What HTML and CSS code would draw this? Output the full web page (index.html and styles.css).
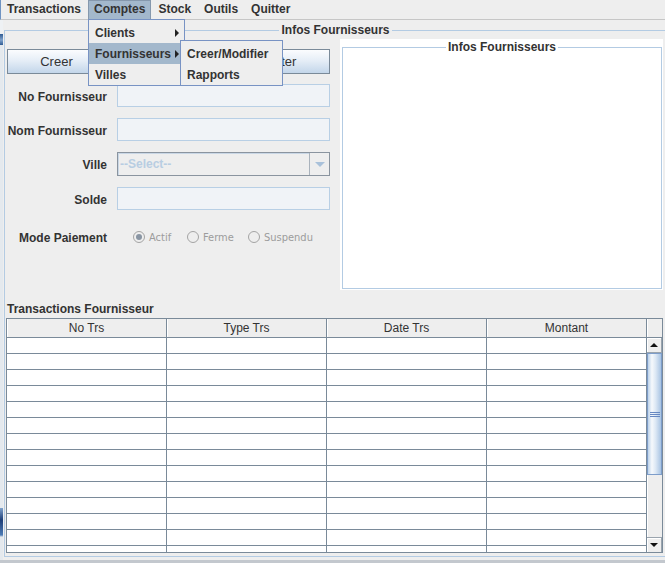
FILE: index.html
```html
<!DOCTYPE html>
<html lang="fr">
<head>
<meta charset="utf-8">
<title>Fournisseurs</title>
<link rel="stylesheet" href="styles.css">
</head>
<body>
<div class="window">
  <nav class="menubar">
    <span class="menu">Transactions</span>
    <span class="menu open">Comptes</span>
    <span class="menu">Stock</span>
    <span class="menu">Outils</span>
    <span class="menu">Quitter</span>
  </nav>
  <div class="main">
    <div class="strip"></div>
    <fieldset class="titled outer">
      <legend>Infos Fournisseurs</legend>
      <div class="upper">
        <div class="form">
          <div class="buttons">
            <button class="btn">Creer</button>
            <button class="btn" aria-label="Modifier"></button>
            <button class="btn">Lister</button>
          </div>
          <div class="grid">
            <span class="lbl">No Fournisseur</span><div class="field"></div>
            <span class="lbl">Nom Fournisseur</span><div class="field"></div>
            <span class="lbl">Ville</span>
            <div class="combo"><span class="combo-text">--Select--</span><span class="combo-arrow"></span></div>
            <span class="lbl">Solde</span><div class="field"></div>
            <span class="lbl">Mode Paiement</span>
            <div class="radios">
              <span class="radio r1"><span class="dot on"></span>Actif</span>
              <span class="radio r2"><span class="dot"></span>Ferme</span>
              <span class="radio"><span class="dot"></span>Suspendu</span>
            </div>
          </div>
        </div>
        <div class="panel">
          <fieldset class="titled inner"><legend>Infos Fournisseurs</legend></fieldset>
        </div>
      </div>
      <div class="section-title">Transactions Fournisseur</div>
      <div class="scrollpane">
        <div class="thead">
          <div class="th">No Trs</div>
          <div class="th">Type Trs</div>
          <div class="th">Date Trs</div>
          <div class="th">Montant</div>
          <div class="th corner"></div>
        </div>
        <div class="tbody">
          <div class="rows">
            <div class="tr"><div class="td"></div><div class="td"></div><div class="td"></div><div class="td"></div></div>
            <div class="tr"><div class="td"></div><div class="td"></div><div class="td"></div><div class="td"></div></div>
            <div class="tr"><div class="td"></div><div class="td"></div><div class="td"></div><div class="td"></div></div>
            <div class="tr"><div class="td"></div><div class="td"></div><div class="td"></div><div class="td"></div></div>
            <div class="tr"><div class="td"></div><div class="td"></div><div class="td"></div><div class="td"></div></div>
            <div class="tr"><div class="td"></div><div class="td"></div><div class="td"></div><div class="td"></div></div>
            <div class="tr"><div class="td"></div><div class="td"></div><div class="td"></div><div class="td"></div></div>
            <div class="tr"><div class="td"></div><div class="td"></div><div class="td"></div><div class="td"></div></div>
            <div class="tr"><div class="td"></div><div class="td"></div><div class="td"></div><div class="td"></div></div>
            <div class="tr"><div class="td"></div><div class="td"></div><div class="td"></div><div class="td"></div></div>
            <div class="tr"><div class="td"></div><div class="td"></div><div class="td"></div><div class="td"></div></div>
            <div class="tr"><div class="td"></div><div class="td"></div><div class="td"></div><div class="td"></div></div>
            <div class="tr"><div class="td"></div><div class="td"></div><div class="td"></div><div class="td"></div></div>
            <div class="tr"><div class="td"></div><div class="td"></div><div class="td"></div><div class="td"></div></div>
          </div>
          <div class="vscroll">
            <div class="sb-btn sb-up"></div>
            <div class="thumb"><span class="grip"></span></div>
            <div class="track"></div>
            <div class="sb-btn sb-down"></div>
          </div>
        </div>
      </div>
    </fieldset>
  </div>
  <div class="bottom"></div>

  <div class="dropdown">
    <div class="mi">Clients<span class="arrow-r"></span></div>
    <div class="mi sel">Fournisseurs<span class="arrow-r"></span></div>
    <div class="mi">Villes</div>
  </div>
  <div class="submenu">
    <div class="mi">Creer/Modifier</div>
    <div class="mi">Rapports</div>
  </div>
</div>
</body>
</html>
```

FILE: styles.css
```css
* { box-sizing: border-box; }

html, body {
  margin: 0;
  padding: 0;
  width: 665px;
  height: 563px;
  overflow: hidden;
  background: #eeeeee;
  font-family: "Liberation Sans", Arial, sans-serif;
  color: #333333;
}

.window {
  position: relative;
  width: 665px;
  height: 563px;
  display: flex;
  flex-direction: column;
  overflow: hidden;
}

/* menu bar */
.menubar {
  display: flex;
  gap: 1px;
  height: 20px;
  flex: none;
  background: #eeeeee;
  border-left: 1px solid #6f93c2;
  border-bottom: 1px solid #c6c6c6;
}
.menu {
  height: 19px;
  padding: 0 6px;
  font-size: 12px;
  font-weight: bold;
  line-height: 19px;
}
.menu.open {
  background: #a3b8cc;
  box-shadow: inset 1px 0 #8598ad, inset -1px 0 #8598ad, inset 0 1px #8598ad;
}

/* main area */
.main {
  display: flex;
  align-items: flex-start;
  flex: 1;
  min-width: 0;
}
.strip {
  width: 3px;
  flex: none;
  align-self: stretch;
  background: linear-gradient(to bottom,
    #eef1f4 0, #eef1f4 14px,
    #2f5b93 14px, #7fa2cc 20px, #2f5b93 25px,
    #e4e9ee 25px, #e4e9ee 488px,
    #7fa2cc 488px, #1e3f78 500px, #4d7bb5 515px,
    #e4e9ee 517px);
}

.titled {
  margin: 0;
  padding: 0;
  min-width: 0;
  border: 1px solid #b3cbe3;
}
.titled legend {
  margin: 0 auto;
  padding: 0 2px;
  font-size: 12px;
  font-weight: bold;
  line-height: 15px;
}
.outer {
  flex: none;
  width: 663px;
  margin: 3px 0 3px 1px;
  padding: 1px 0 3px 0;
}

.upper {
  display: flex;
  gap: 10px;
  height: 251px;
  margin-left: 2px;
}

/* left form */
.form {
  width: 323px;
  flex: none;
  padding-top: 10px;
}
.buttons {
  display: flex;
  gap: 13px;
}
.btn {
  width: 99px;
  height: 25px;
  padding: 0;
  flex: none;
  border: 1px solid #7a8a99;
  background: linear-gradient(to bottom, #fbfcfe 0, #e6eef7 45%, #c3d6ea 100%);
  font-family: "Liberation Sans", Arial, sans-serif;
  font-size: 13px;
  color: #333333;
}

.grid {
  display: grid;
  grid-template-columns: 100px 213px;
  column-gap: 10px;
  row-gap: 11px;
  margin-top: 10px;
  align-items: center;
}
.lbl {
  justify-self: end;
  padding-top: 2px;
  font-size: 12px;
  font-weight: bold;
  line-height: 14px;
}
.field {
  height: 23px;
  border: 1px solid #b8cfe5;
  background: #f0f3f7;
}
.combo {
  display: flex;
  height: 24px;
  border: 1px solid #8a949f;
  background: #eeeeee;
}
.combo-text {
  flex: 1;
  padding-left: 2px;
  border-right: 1px solid #a9b2bc;
  box-shadow: inset 1px 1px #c9d7e6;
  font-size: 12px;
  font-weight: bold;
  line-height: 23px;
  color: #b8cde2;
}
.combo-arrow {
  width: 19px;
  display: flex;
  align-items: center;
  justify-content: center;
}
.combo-arrow::before {
  content: "";
  border-left: 5px solid transparent;
  border-right: 5px solid transparent;
  border-top: 5px solid #a9c1da;
}

.radios {
  display: flex;
  align-items: center;
  height: 32px;
  padding-left: 16px;
  font-family: "DejaVu Sans Condensed", "DejaVu Sans", sans-serif;
  font-stretch: condensed;
  font-size: 11px;
  color: #9c9c9c;
}
.radio {
  display: flex;
  align-items: center;
  gap: 4px;
}
.r1 { width: 54px; }
.r2 { width: 61px; }
.dot {
  width: 12px;
  height: 12px;
  flex: none;
  border: 1px solid #a4a4a4;
  border-radius: 50%;
  background: #eeeeee;
}
.dot.on::after {
  content: "";
  display: block;
  width: 6px;
  height: 6px;
  margin: 2px;
  border-radius: 50%;
  background: #8995a3;
}

/* right panel */
.panel {
  width: 323px;
  flex: none;
  background: #ffffff;
  padding: 1px 1px 1px 2px;
}
.inner {
  height: 249px;
}

/* table */
.section-title {
  margin: 12px 0 2px 2px;
  font-size: 12px;
  font-weight: bold;
  line-height: 14px;
}
.scrollpane {
  width: 657px;
  margin-left: 1px;
  border: 1px solid #7a8a99;
  background: #eeeeee;
}
.thead {
  display: flex;
  height: 19px;
  border-bottom: 1px solid #7a8a99;
  background: #eeeeee;
}
.th {
  width: 160px;
  flex: none;
  border-right: 1px solid #7a8a99;
  box-shadow: inset 1px 0 #ffffff;
  text-align: center;
  font-size: 12px;
  line-height: 19px;
}
.th.corner {
  width: 15px;
  border-right: none;
}
.tbody {
  display: flex;
  height: 214px;
}
.rows {
  width: 640px;
  flex: none;
  overflow: hidden;
  background: #ffffff;
}
.tr {
  display: flex;
  height: 16px;
  border-bottom: 1px solid #7a8a99;
}
.td {
  width: 160px;
  flex: none;
  border-right: 1px solid #7a8a99;
}

/* scrollbar */
.vscroll {
  width: 15px;
  flex: none;
  display: flex;
  flex-direction: column;
  background: #eeeeee;
  box-shadow: inset 1px 0 #ffffff;
}
.sb-btn {
  height: 15px;
  flex: none;
  display: flex;
  align-items: center;
  justify-content: center;
  background: #eeeeee;
  border-right: 1px solid #9aa4ae;
  border-bottom: 1px solid #9aa4ae;
  box-shadow: inset 1px 1px #ffffff;
}
.sb-up::before {
  content: "";
  border-left: 4px solid transparent;
  border-right: 4px solid transparent;
  border-bottom: 4px solid #111111;
}
.sb-down {
  border-top: 1px solid #9aa4ae;
  border-bottom: none;
}
.sb-down::before {
  content: "";
  border-left: 4px solid transparent;
  border-right: 4px solid transparent;
  border-top: 4px solid #111111;
}
.thumb {
  height: 122px;
  flex: none;
  display: flex;
  align-items: center;
  justify-content: center;
  border: 1px solid #7d9dca;
  background: linear-gradient(to right, #bcd2ea 0, #f6f9fc 30%, #dbe7f4 60%, #a9c4e3 100%);
}
.grip {
  width: 10px;
  height: 5px;
  background: repeating-linear-gradient(to bottom, #6688c2 0, #6688c2 1px, transparent 1px, transparent 2px);
}
.track {
  flex: 1;
}

.bottom {
  height: 3px;
  flex: none;
  background: #c3c8ce;
}

/* open menus (overlay) */
.dropdown,
.submenu {
  position: absolute;
  background: #eeeeee;
  border: 1px solid #7893c4;
  padding-top: 2px;
}
.dropdown {
  left: 88px;
  top: 19px;
  width: 97px;
  height: 67px;
}
.submenu {
  left: 180px;
  top: 40px;
  width: 103px;
  height: 46px;
}
.mi {
  display: flex;
  align-items: center;
  justify-content: space-between;
  height: 21px;
  padding: 1px 5px 0 6px;
  font-size: 12px;
  font-weight: bold;
  line-height: 20px;
}
.mi.sel {
  background: #a3b8cc;
}
.arrow-r {
  border-top: 4px solid transparent;
  border-bottom: 4px solid transparent;
  border-left: 4px solid #222222;
}
```
